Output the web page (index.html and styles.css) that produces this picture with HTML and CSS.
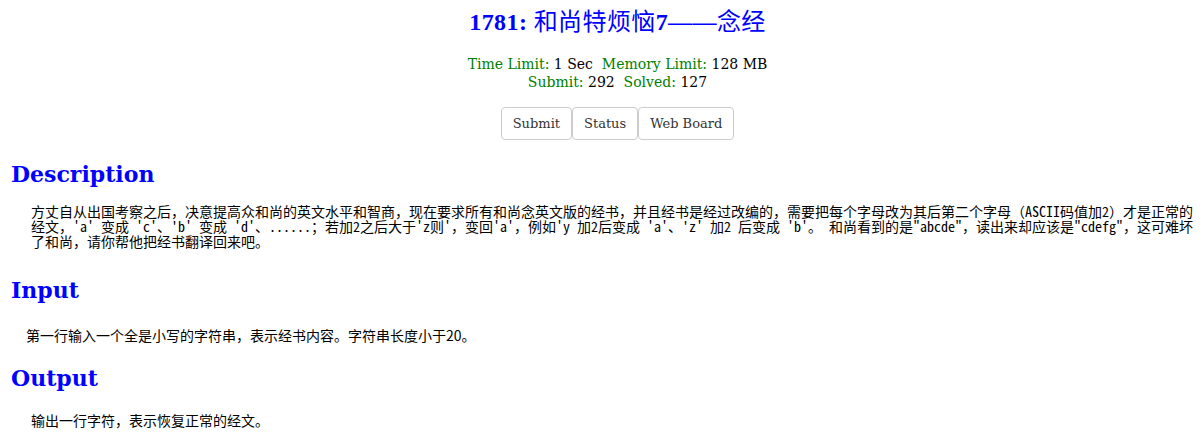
FILE: index.html
```html
<!DOCTYPE html>
<html lang="zh">
<head>
  <meta charset="UTF-8">
  <title>1781: 和尚特烦恼7——念经</title>
  <link rel="stylesheet" href="styles.css">
</head>
<body>
  <div class="problem-head">
    <h1 class="title">1781: <span class="cjk">和尚特烦恼</span>7——<span class="cjk">念经</span></h1>
    <div class="limits">
      <span class="green">Time Limit: </span>1 Sec&nbsp;&nbsp;<span class="green">Memory Limit: </span>128 MB<br>
      <span class="green">Submit: </span>292&nbsp;&nbsp;<span class="green">Solved: </span>127
    </div>
    <div class="btn-group">
      <a class="btn" href="#">Submit</a>
      <a class="btn" href="#">Status</a>
      <a class="btn" href="#">Web Board</a>
    </div>
  </div>

  <h2>Description</h2>
  <div class="content desc">
    方丈自从出国考察之后，决意提高众和尚的英文水平和智商，现在要求所有和尚念英文版的经书，并且经书是经过改编的，需要把每个字母改为其后第二个字母（ASCII码值加2）才是正常的经文，'a' 变成 'c'、'b' 变成 'd'、......；若加2之后大于'z则'，变回'a'，例如'y 加2后变成 'a'、'z' 加2 后变成 'b'。 和尚看到的是"abcde"，读出来却应该是"cdefg"，这可难坏了和尚，请你帮他把经书翻译回来吧。
  </div>

  <h2 class="gap-input">Input</h2>
  <div class="content plain input">第一行输入一个全是小写的字符串，表示经书内容。字符串长度小于20。</div>

  <h2>Output</h2>
  <div class="content plain output">输出一行字符，表示恢复正常的经文。</div>
</body>
</html>
```

FILE: styles.css
```css
body {
  margin: 8px;
  font-family: "DejaVu Serif", "Noto Sans CJK SC", serif;
  color: #000;
  background: #fff;
}

.problem-head {
  margin-left: 32px;
  text-align: center;
}

.title {
  margin: 0;
  font-family: "Liberation Serif", "Noto Sans CJK SC", serif;
  font-size: 24px;
  line-height: 24px;
  letter-spacing: 0.4px;
  color: #0000ff;
}

.title .cjk {
  font-family: "Noto Sans CJK SC", sans-serif;
  font-weight: normal;
}

.limits {
  margin-top: 21px;
  font-size: 14px;
  line-height: 18px;
}

.green {
  color: #008000;
}

.btn-group {
  display: inline-flex;
  margin-top: 16px;
}

.btn {
  display: block;
  padding: 0 11px;
  height: 31px;
  line-height: 31px;
  font-size: 13px;
  color: #333;
  text-decoration: none;
  border: 1px solid #ccc;
  border-radius: 4px;
}

h2 {
  margin: 20px 0 0 3px;
  font-size: 22px;
  line-height: 28px;
  color: #0000ff;
}

.gap-input {
  margin-top: 27px;
}

.content {
  padding-left: 23px;
}

.desc {
  margin-top: 16px;
  font-family: "Noto Sans Mono CJK SC", "Noto Sans CJK SC", monospace;
  font-size: 14px;
  line-height: 15px;
}

.plain {
  margin-top: 22px;
  font-family: "Noto Sans CJK SC", sans-serif;
  font-size: 14px;
  line-height: 18px;
}

.input {
  padding-left: 18px;
}

.output {
  margin-top: 19px;
}
```
